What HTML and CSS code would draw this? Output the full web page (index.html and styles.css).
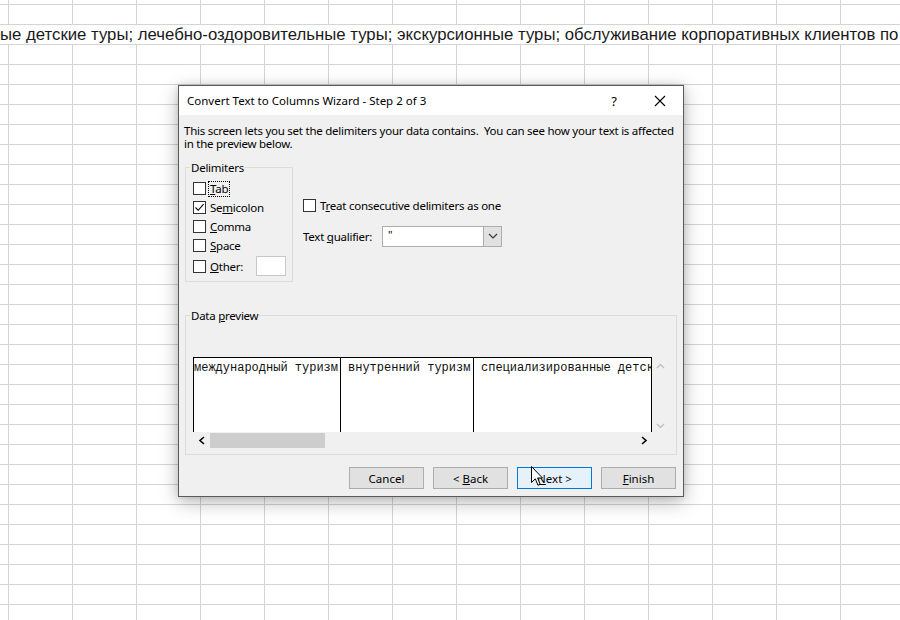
FILE: index.html
```html
<!DOCTYPE html>
<html lang="en">
<head>
<meta charset="utf-8">
<title>Convert Text to Columns Wizard</title>
<link rel="stylesheet" href="styles.css">
</head>
<body>
<div class="row-text">ые детские туры; лечебно-оздоровительные туры; экскурсионные туры; обслуживание корпоративных клиентов по</div>

<div class="dialog">
  <div class="titlebar">
    <span class="title">Convert Text to Columns Wizard - Step 2 of 3</span>
    <span class="tb-btn help">?</span>
    <span class="tb-btn close"><svg width="12" height="12" viewBox="0 0 12 12"><path d="M1 1 L11 11 M11 1 L1 11" stroke="#000" stroke-width="1.1" fill="none"/></svg></span>
  </div>
  <div class="body">
    <p class="desc">This screen lets you set the delimiters your data contains.&nbsp; You can see how your text is affected<br>in the preview below.</p>

    <div class="options">
      <div class="group delims">
        <div class="group-label">Delimiters</div>
        <div class="cb-row first"><span class="cb"></span><span class="focus"><u>T</u>ab</span></div>
        <div class="cb-row"><span class="cb"><svg width="11" height="11" viewBox="0 0 11 11"><path d="M1.5 5.5 L4.2 8.3 L9.6 2.2" stroke="#000" stroke-width="1.1" fill="none"/></svg></span><span>Se<u>m</u>icolon</span></div>
        <div class="cb-row"><span class="cb"></span><span><u>C</u>omma</span></div>
        <div class="cb-row"><span class="cb"></span><span><u>S</u>pace</span></div>
        <div class="cb-row other"><span class="cb"></span><span><u>O</u>ther:</span><span class="other-box"></span></div>
      </div>
      <div class="right-opts">
        <div class="cb-row treat"><span class="cb"></span><span>T<u>r</u>eat consecutive delimiters as one</span></div>
        <div class="qual-row">
          <span class="qual-label">Text <u>q</u>ualifier:</span>
          <span class="combo"><span class="combo-val">"</span><span class="combo-btn"><svg width="10" height="6" viewBox="0 0 10 6"><path d="M1 1 L5 5 L9 1" stroke="#333" stroke-width="1.1" fill="none"/></svg></span></span>
        </div>
      </div>
    </div>

    <div class="group preview">
      <div class="group-label">Data <u>p</u>review</div>
      <div class="pv">
        <div class="pv-main">
          <div class="pv-cols">
            <div class="pv-col c1">международный туризм</div>
            <div class="pv-col c2">внутренний туризм</div>
            <div class="pv-col c3">специализированные детские туры</div>
          </div>
          <div class="hscroll">
            <span class="arr"><svg width="8" height="9" viewBox="0 0 8 9"><path d="M6 1 L2 4.5 L6 8" stroke="#000" stroke-width="1.6" fill="none"/></svg></span>
            <span class="thumb"></span>
            <span class="track"></span>
            <span class="arr"><svg width="8" height="9" viewBox="0 0 8 9"><path d="M2 1 L6 4.5 L2 8" stroke="#000" stroke-width="1.6" fill="none"/></svg></span>
          </div>
        </div>
        <div class="vscroll">
          <span class="varr"><svg width="9" height="6" viewBox="0 0 9 6"><path d="M1 5 L4.5 1.5 L8 5" stroke="#bfbfbf" stroke-width="1.4" fill="none"/></svg></span>
          <span class="varr"><svg width="9" height="6" viewBox="0 0 9 6"><path d="M1 1 L4.5 4.5 L8 1" stroke="#bfbfbf" stroke-width="1.4" fill="none"/></svg></span>
        </div>
      </div>
    </div>

    <div class="buttons">
      <span class="btn">Cancel</span>
      <span class="btn">&lt;&nbsp;<u>B</u>ack</span>
      <span class="btn hot"><u>N</u>ext&nbsp;&gt;</span>
      <span class="btn"><u>F</u>inish</span>
    </div>
  </div>
</div>

<svg class="cursor" width="13" height="21" viewBox="0 0 13 21"><path d="M0.5 0.5 L0.5 16.5 L4.3 12.8 L7 19.2 L9.2 18.3 L6.6 12 L11.5 12 Z" fill="#fff" stroke="#000" stroke-width="1"/></svg>
</body>
</html>
```

FILE: styles.css
```css
html, body {
  height: 100%;
}
body {
  margin: 0;
  overflow: hidden;
  background-color: #fff;
  background-image:
    linear-gradient(90deg, #d4d4d4 1px, transparent 1px),
    linear-gradient(180deg, #d4d4d4 1px, transparent 1px);
  background-size: 64px 20px;
  background-position: 8px 4px;
  font-family: "Noto Sans", "Open Sans", sans-serif;
}
.row-text {
  margin-top: 25px;
  height: 19px;
  line-height: 19px;
  background: #fff;
  font-family: "Liberation Sans", Arial, sans-serif;
  font-size: 16.75px;
  color: #1a1a1a;
  white-space: nowrap;
  overflow: hidden;
}

.dialog {
  position: absolute;
  left: 178px;
  top: 85px;
  width: 506px;
  height: 412px;
  box-sizing: border-box;
  border: 1px solid #5a5a5a;
  background: #f0f0f0;
  box-shadow: 0 5px 18px rgba(0,0,0,0.28), 0 0 6px rgba(0,0,0,0.12);
  font-size: 11.5px;
  letter-spacing: -0.25px;
  color: #000;
}
.titlebar {
  height: 29px;
  background: #fff;
  display: flex;
  align-items: center;
}
.title {
  flex: 1;
  padding-left: 8px;
  font-size: 11.5px;
  letter-spacing: 0;
}
.tb-btn {
  width: 46px;
  height: 29px;
  display: flex;
  align-items: center;
  justify-content: center;
}
.help { font-size: 13px; }

.body {
  padding: 0 7px 0 5px;
}
.desc {
  margin: 9px 0 0 0;
  line-height: 13px;
  white-space: nowrap;
}
.options {
  display: flex;
  align-items: flex-start;
  margin-top: 17px;
}
.group {
  border: 1px solid #dcdcdc;
  margin-left: 1px;
  box-sizing: border-box;
}
.group-label {
  margin: -7px 0 0 4px;
  padding: 0 1px;
  line-height: 13px;
  height: 13px;
  background: #f0f0f0;
  width: max-content;
}
.delims {
  width: 108px;
  height: 115px;
  padding: 0 6px 0 7px;
}
.delims .group-label { margin-left: -3px; }
.cb-row.first { margin-top: 5px; }
.cb-row {
  display: flex;
  align-items: center;
  height: 19px;
}
.cb {
  width: 13px;
  height: 13px;
  box-sizing: border-box;
  border: 1px solid #333;
  background: #fff;
  margin-right: 4px;
  display: flex;
  align-items: center;
  justify-content: center;
  flex: none;
}
.focus {
  outline: 1px dotted #000;
  outline-offset: 0;
  line-height: 14px;
  padding: 0 1px;
  margin-left: -1px;
}
.cb-row.other {
  height: 22px;
}
.other-box {
  margin-left: auto;
  width: 30px;
  height: 20px;
  box-sizing: border-box;
  border: 1px solid #c8c8c8;
  background: #fff;
}
.right-opts {
  margin-left: 10px;
  padding-top: 29px;
}
.qual-row {
  display: flex;
  align-items: center;
  height: 22px;
  margin-top: 10px;
}
.qual-label {
  width: 79px;
}
.combo {
  display: flex;
  width: 120px;
  height: 21px;
  box-sizing: border-box;
  border: 1px solid #adadad;
  background: #fff;
}
.combo-val {
  flex: 1;
  padding-left: 5px;
  line-height: 15px;
  font-size: 11px;
}
.combo-btn {
  width: 17px;
  background: #e1e1e1;
  border-left: 1px solid #adadad;
  display: flex;
  align-items: center;
  justify-content: center;
}

.preview {
  margin-top: 33px;
  width: 492px;
  height: 140px;
  padding: 0 0 0 7px;
}
.preview .group-label { margin-left: -3px; }
.pv {
  display: flex;
  margin-top: 35px;
}
.pv-main {
  width: 459px;
}
.pv-cols {
  display: flex;
  height: 75px;
  box-sizing: border-box;
  border: 1px solid #000;
  border-bottom: none;
  background: #fff;
  font-family: "Liberation Mono", "Courier New", monospace;
  font-size: 12px;
  letter-spacing: 0;
  line-height: 14px;
  white-space: nowrap;
  overflow: hidden;
  color: #111;
}
.pv-col {
  padding-top: 3px;
  overflow: hidden;
  flex: none;
}
.c1 { width: 146px; border-right: 1px solid #000; }
.c2 { width: 125px; padding-left: 7px; border-right: 1px solid #000; }
.c3 { width: 170px; padding-left: 7px; }
.hscroll {
  display: flex;
  align-items: center;
  height: 16px;
  background: #f0f0f0;
}
.arr {
  width: 17px;
  height: 16px;
  display: flex;
  align-items: center;
  justify-content: center;
  flex: none;
}
.thumb {
  width: 115px;
  height: 15px;
  background: #cdcdcd;
  flex: none;
}
.track { flex: 1; }
.vscroll {
  width: 16px;
  height: 75px;
  display: flex;
  flex-direction: column;
  justify-content: space-between;
  align-items: center;
  padding: 3px 0 0;
  box-sizing: border-box;
}
.varr {
  height: 12px;
  display: flex;
  align-items: center;
}

.buttons {
  display: flex;
  justify-content: flex-end;
  gap: 9px;
  margin-top: 12px;
}
.btn {
  width: 75px;
  height: 22px;
  box-sizing: border-box;
  border: 1px solid #adadad;
  background: #e1e1e1;
  display: flex;
  align-items: center;
  justify-content: center;
  letter-spacing: 0;
}
.btn.hot {
  border-color: #0078d7;
  background: #e5f1fb;
}

.cursor {
  position: absolute;
  left: 531px;
  top: 466px;
}
```
